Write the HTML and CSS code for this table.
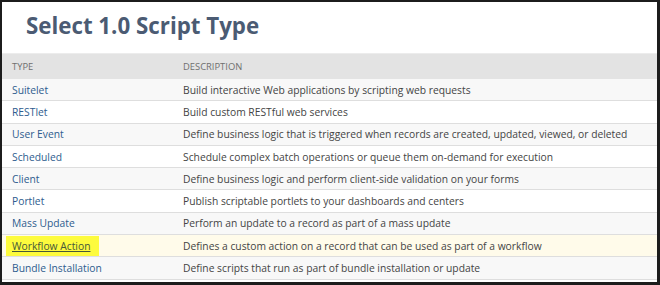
FILE: index.html
```html
<!DOCTYPE html>
<html lang="en">
<head>
    <meta charset="UTF-8">
    <title>Select 1.0 Script Type</title>
    <link rel="stylesheet" href="styles.css">
</head>
<body>
    <div class="frame">
        <h1 class="pageTitle">Select 1.0 Script Type</h1>

        <table class="scriptTypes">
            <thead>
                <tr>
                    <th class="colType">Type</th>
                    <th>Description</th>
                </tr>
            </thead>
            <tbody>
                <tr><td><a href="#">Suitelet</a></td><td>Build interactive Web applications by scripting web requests</td></tr>
                <tr><td><a href="#">RESTlet</a></td><td>Build custom RESTful web services</td></tr>
                <tr><td><a href="#">User Event</a></td><td>Define business logic that is triggered when records are created, updated, viewed, or deleted</td></tr>
                <tr><td><a href="#">Scheduled</a></td><td>Schedule complex batch operations or queue them on-demand for execution</td></tr>
                <tr><td><a href="#">Client</a></td><td>Define business logic and perform client-side validation on your forms</td></tr>
                <tr><td><a href="#">Portlet</a></td><td>Publish scriptable portlets to your dashboards and centers</td></tr>
                <tr><td><a href="#">Mass Update</a></td><td>Perform an update to a record as part of a mass update</td></tr>
                <tr class="hover"><td><a href="#" class="marked">Workflow Action</a></td><td>Defines a custom action on a record that can be used as part of a workflow</td></tr>
                <tr><td><a href="#">Bundle Installation</a></td><td>Define scripts that run as part of bundle installation or update</td></tr>
            </tbody>
        </table>
    </div>
</body>
</html>
```

FILE: styles.css
```css
body {
    margin: 0;
    font-family: 'Open Sans', sans-serif;
    background-color: #fff;
}

.frame {
    width: 660px;
    height: 285px;
    box-sizing: border-box;
    border-style: solid;
    border-color: #1c1c1c;
    border-width: 2px 3px 3px 2px;
    overflow: hidden;
}

.pageTitle {
    margin: 0;
    height: 51px;
    padding-left: 24px;
    font-size: 22.3px;
    line-height: 48px;
    font-weight: 700;
    color: #4b5b73;
}

.scriptTypes {
    width: 100%;
    border-collapse: collapse;
    font-size: 10.3px;
    white-space: nowrap;
}

.scriptTypes th {
    height: 25px;
    padding: 0 10px;
    background-color: #e3e3e3;
    color: #6f6f6f;
    font-size: 9.4px;
    font-weight: 400;
    text-transform: uppercase;
    text-align: left;
    border-top: 1px solid #ececec;
}

.scriptTypes .colType {
    width: 151px;
}

.scriptTypes td {
    height: 21.3px;
    padding: 0 10px;
    color: #444;
    border-bottom: 1px solid #dedede;
}

.scriptTypes tbody tr:nth-child(odd) {
    background-color: #f8f8f8;
}

.scriptTypes tbody tr.hover {
    background-color: #fffbea;
}

.scriptTypes a {
    color: #2e5c8e;
    text-decoration: none;
}

/* highlighter mark over the selected type */
.scriptTypes a.marked {
    color: #45573a;
    text-decoration: underline;
    background-color: #fdfb3d;
    padding: 3px 9px 3px 6px;
    margin-left: -6px;
}
```
